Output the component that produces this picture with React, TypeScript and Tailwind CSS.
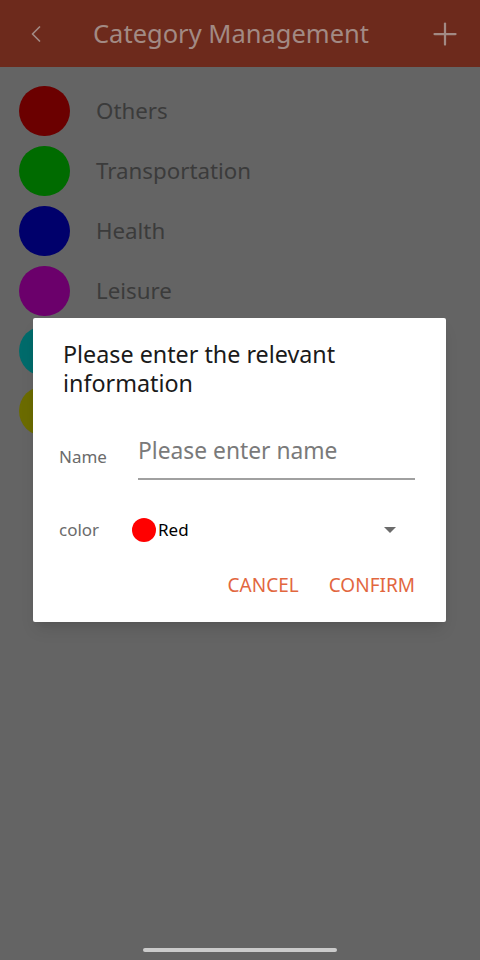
import { ChevronLeft, Plus } from "lucide-react";

// the last two rows sit behind the dialog, only their colour dots show
const categories = [
  { name: "Others", color: "bg-[#6b0000]" },
  { name: "Transportation", color: "bg-[#006b00]" },
  { name: "Health", color: "bg-[#00006b]" },
  { name: "Leisure", color: "bg-[#6b006b]" },
  { name: "", color: "bg-[#006b6b]" },
  { name: "", color: "bg-[#6b6b00]" },
];

const App = () => {
  return (
    <div
      className="relative w-[480px] h-[960px] bg-[#646464] overflow-hidden"
      style={{ fontFamily: "'Noto Sans', 'Open Sans', sans-serif" }}
    >
      <header className="h-[67px] bg-[#6d2a1c] flex items-center px-[22px]">
        <ChevronLeft className="w-[28px] h-[28px] text-[#a28a84]" strokeWidth={1.5} />
        <h1 className="ml-[43px] text-[25.5px] text-[#a28a84] flex-1">Category Management</h1>
        <Plus className="w-[36px] h-[36px] text-[#a28a84] -mr-[5px]" strokeWidth={1.5} />
      </header>

      <ul className="pt-[14px]">
        {categories.map((c, index) => (
          <li key={index} className="h-[60px] flex items-center pl-[19px]">
            <div className={`${c.color} w-[51px] h-[50px] rounded-full`} />
            {c.name && (
              <span className="ml-[26px] text-[22.3px] text-[#3b3b3b]">{c.name}</span>
            )}
          </li>
        ))}
      </ul>

      <div className="absolute left-[33px] top-[318px] w-[413px] h-[304px] bg-white rounded-[2px] shadow-lg">
        <div className="pl-[30px] pr-[24px] pt-[22px]">
          <h2 className="text-[23.3px] leading-[29px] text-[#1a1a1a]">
            Please enter the relevant
            <br />
            information
          </h2>

          <div className="mt-[36px] flex items-end">
            <span className="w-[79px] -ml-[4px] pb-[11px] text-[17px] text-[#6b6b6b]">Name</span>
            <div className="flex-1 mr-[7px] border-b-[2px] border-[#a0a0a0] pb-[10px]">
              <span className="text-[22.8px] text-[#7a7a7a]">Please enter name</span>
            </div>
          </div>

          <div className="mt-[37px] flex items-center">
            <span className="w-[73px] -ml-[4px] text-[17px] text-[#6b6b6b]">color</span>
            <div className="w-[24px] h-[24px] rounded-full bg-[#ff0000]" />
            <span className="ml-[2px] text-[17px] text-black">Red</span>
            <div className="flex-1" />
            <svg width="14" height="8" viewBox="0 0 14 8" className="mr-[25px]">
              <path d="M1 1 L13 1 L7 7 Z" fill="#6b6b6b" />
            </svg>
          </div>

          <div className="mt-[28px] flex justify-end items-center gap-[30px] pr-[7px]">
            <span className="text-[19px] text-[#e2673f]">CANCEL</span>
            <span className="text-[19px] text-[#e2673f]">CONFIRM</span>
          </div>
        </div>
      </div>

      <div className="absolute left-[143px] top-[948px] w-[194px] h-[4px] rounded-full bg-[#cbcbcb]" />
    </div>
  );
};

export default App;
